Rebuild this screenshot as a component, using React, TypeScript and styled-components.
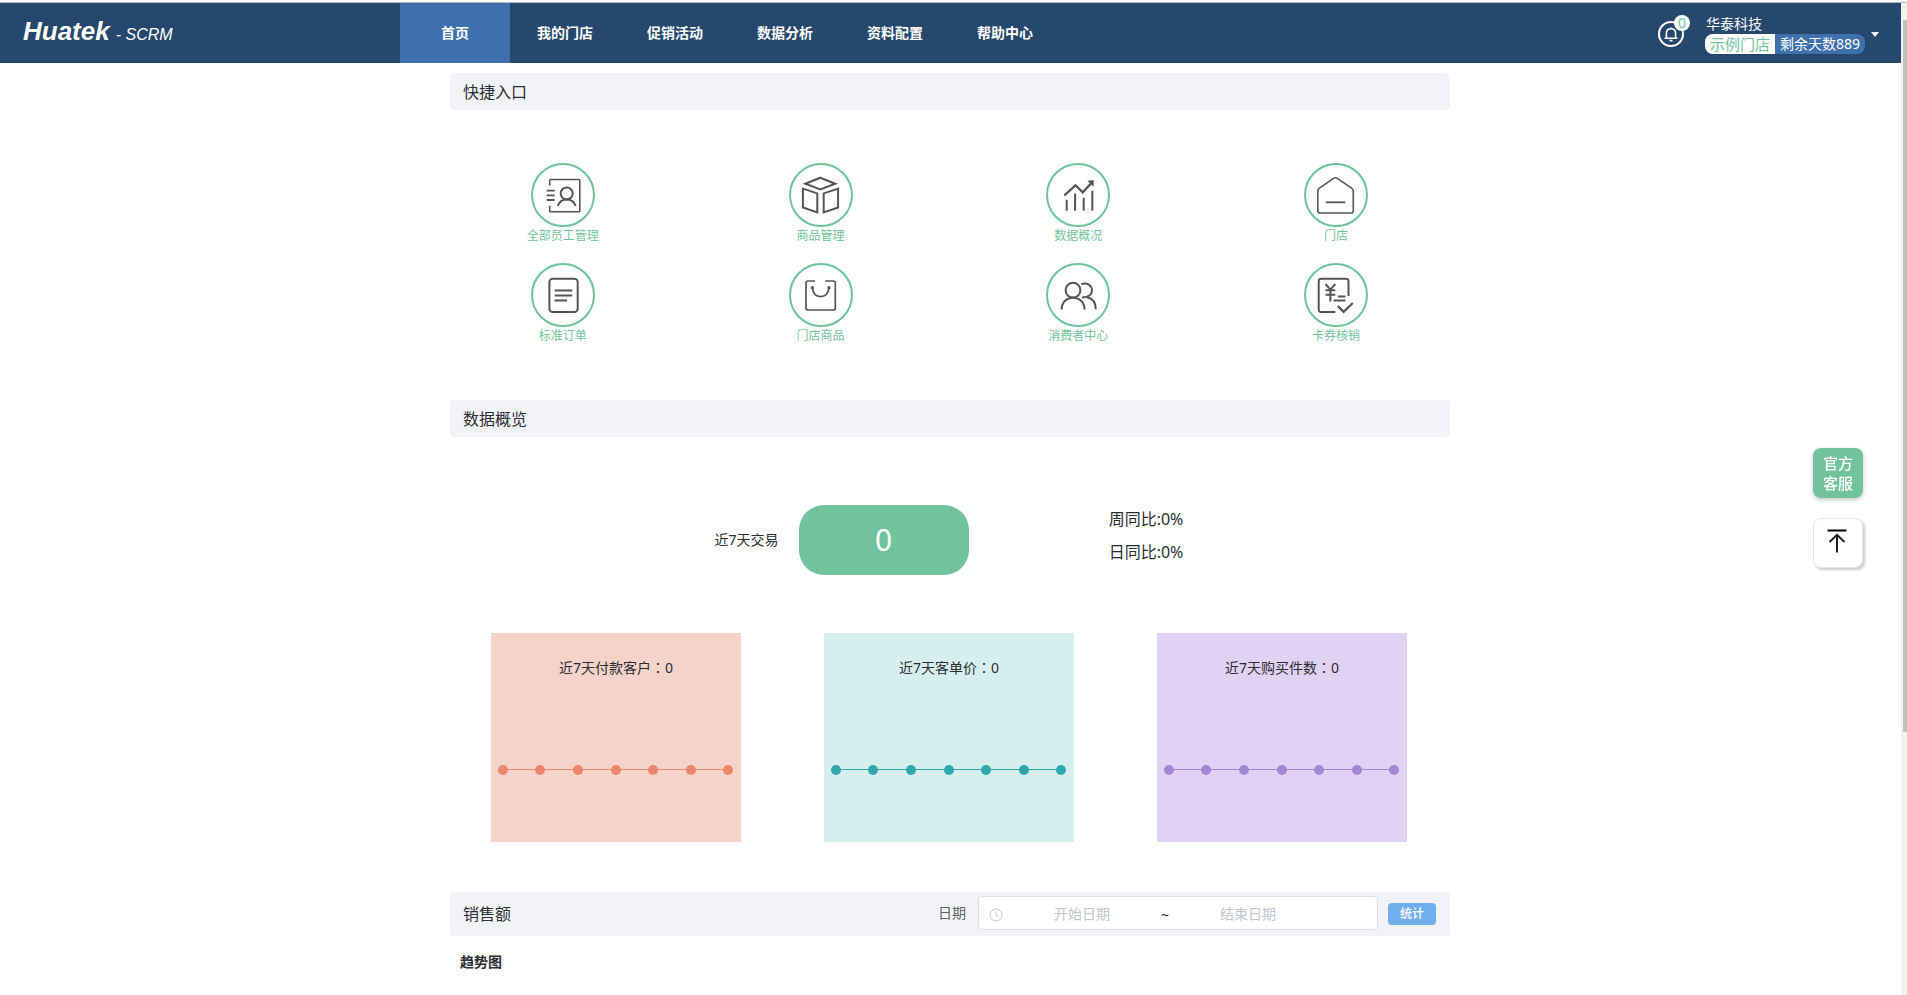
import React from 'react';
import styled, { createGlobalStyle } from 'styled-components';

const green = '#6fc39a';

const GlobalStyle = createGlobalStyle`
  *, *::before, *::after { box-sizing: border-box; }
  body {
    margin: 0;
    background: #fff;
    color: #2b2d33;
    font: 14px/20px "Noto Sans", "Noto Sans CJK SC", sans-serif;
  }
  button, input { font: inherit; }
  h1, h2, h3, p, ul { margin: 0; padding: 0; }
  a { text-decoration: none; }
`;

const Page = styled.div`
  display: flex;
  min-height: 100vh;
  padding-top: 2px;
`;

const Content = styled.div`
  flex: 1;
  min-width: 0;
  border-top: 1px solid #b4b4bb;
`;

const ScrollTrack = styled.div`
  display: flex;
  flex-direction: column;
  width: 6px;
  padding: 17px 0 0 2px;
  background: #f1f1f1;
  border-top: 1px solid #b4b4bb;
`;

const ScrollThumb = styled.div`
  height: 73%;
  background: #c1c1c1;
`;

const Header = styled.header`
  display: flex;
  align-items: center;
  height: 60px;
  padding-right: 22px;
  background: #26486d;
  color: #fff;
`;

const Logo = styled.a`
  display: flex;
  align-items: baseline;
  gap: 6px;
  width: 400px;
  padding-left: 23px;
  color: #fff;
  font: italic 16px/32px "Liberation Sans", Arial, sans-serif;
`;

const LogoName = styled.strong`
  font-size: 26px;
`;

const Nav = styled.nav`
  display: flex;
  flex: 1;
  align-self: stretch;
`;

const NavLink = styled.a<{ $active?: boolean }>`
  width: 110px;
  line-height: 60px;
  text-align: center;
  font-weight: 700;
  color: #fff;
  background: ${p => (p.$active ? '#3d70ac' : 'transparent')};
`;

const BellButton = styled.button`
  position: relative;
  display: flex;
  width: 26px;
  height: 26px;
  margin: 2px 21px 0 0;
  padding: 0;
  border: 0;
  background: none;
`;

const Badge = styled.span`
  position: absolute;
  top: -6px;
  right: -6px;
  width: 16px;
  height: 16px;
  border-radius: 8px;
  background: #fff;
  color: ${green};
  font-size: 14px;
  line-height: 16px;
  text-align: center;
`;

const Account = styled.button`
  display: flex;
  align-items: center;
  gap: 6px;
  margin-top: 2px;
  padding: 0;
  border: 0;
  background: none;
  color: #fff;
  text-align: left;
`;

const AccountName = styled.span`
  display: block;
  padding-left: 1px;
`;

const Plan = styled.span`
  display: flex;
  height: 20px;
  border-radius: 8px;
  overflow: hidden;
  background: #3d70ac;
`;

const PlanPart = styled.span<{ $store?: boolean }>`
  padding: 0 5px;
  background: ${p => (p.$store ? '#fff' : 'transparent')};
  color: ${p => (p.$store ? green : '#fff')};
  font-size: ${p => (p.$store ? 15 : 14)}px;
`;

const Main = styled.main`
  padding: 10px 1px 0 0;
`;

const Container = styled.div`
  max-width: 1000px;
  margin: 0 auto;
`;

const SectionBar = styled.div<{ $tall?: boolean }>`
  display: flex;
  align-items: center;
  justify-content: space-between;
  height: ${p => (p.$tall ? 44 : 37)}px;
  padding: 0 14px 0 13px;
  border-radius: 4px;
  background: #f2f3f8;
`;

const SectionTitle = styled.h2`
  font-size: 16px;
  line-height: 24px;
  font-weight: 400;
`;

const Shortcuts = styled.ul`
  display: grid;
  grid-template-columns: repeat(4, 1fr);
  row-gap: 16px;
  margin: 0 -15px 0 -16px;
  padding: 53px 0 53px;
  list-style: none;
`;

const Shortcut = styled.a`
  display: flex;
  flex-direction: column;
  align-items: center;
  height: 84px;
  color: ${green};
  font-size: 12px;
  line-height: 18px;
`;

const ShortcutIcon = styled.svg`
  flex: none;
  fill: none;
  stroke: #555;
  stroke-width: 2;
`;

const Trade = styled.div`
  display: flex;
  align-items: center;
  justify-content: center;
  padding: 66px 2px 0 0;
`;

const TradeTotal = styled.strong`
  width: 170px;
  margin: 0 140px 0 20px;
  border-radius: 25px;
  background: #70c39b;
  color: #fff;
  font-size: 30px;
  font-weight: 400;
  line-height: 70px;
  text-align: center;
`;

const Ratios = styled.div`
  padding-bottom: 8px;
  font-size: 16px;
  line-height: 33px;
`;

const Cards = styled.div`
  display: flex;
  gap: 83px;
  padding: 56px 41px 50px;
`;

const Card = styled.section<{ $bg: string }>`
  width: 250px;
  padding: 25px 0 62px;
  background: ${p => p.$bg};
`;

const CardTitle = styled.h3`
  font-size: 14px;
  line-height: 20px;
  font-weight: 400;
  text-align: center;
`;

/* Traditional face sets the full-width colon in the middle of its square. */
const Colon = styled.span`
  font-family: "Noto Sans CJK TC", sans-serif;
  line-height: 14px;
`;

const Trend = styled.svg`
  display: block;
  margin-top: 82px;
`;

const Filter = styled.form`
  display: flex;
  align-items: center;
  margin-top: -2px;
`;

const FilterLabel = styled.label`
  margin-right: 12px;
  color: #606266;
`;

const DateRange = styled.div`
  display: flex;
  align-items: center;
  width: 400px;
  height: 34px;
  padding-left: 10px;
  border: 1px solid #dcdfe6;
  border-radius: 4px;
  background: #fff;
`;

const ClockIcon = styled.svg`
  flex: none;
  margin: 4px 2px 0 0;
`;

const DateInput = styled.input`
  width: 154px;
  height: 30px;
  padding: 0;
  border: 0;
  outline: 0;
  background: none;
  text-align: center;
  &::placeholder { color: #c0c4cc; opacity: 1; }
`;

const RangeMark = styled.span`
  width: 12px;
  padding-top: 4px;
  text-align: center;
`;

const SubmitButton = styled.button`
  width: 48px;
  height: 22px;
  margin: 2px 0 0 10px;
  padding: 0;
  border: 0;
  border-radius: 4px;
  background: #70aeee;
  color: #fff;
  font-size: 12px;
  font-weight: 500;
  line-height: 22px;
`;

const ChartTitle = styled.h3`
  padding: 16px 10px;
  font-size: 14px;
  line-height: 20px;
`;

const SideTools = styled.aside`
  position: fixed;
  top: 448px;
  right: 44px;
  display: grid;
  gap: 20px;
`;

const SideButton = styled.button<{ $primary?: boolean }>`
  display: flex;
  align-items: center;
  justify-content: center;
  width: 50px;
  height: 50px;
  padding: ${p => (p.$primary ? '0 9px' : '0 2px 4px 0')};
  border: ${p => (p.$primary ? '0' : '1px solid #e6e6e6')};
  border-radius: 8px;
  background: ${p => (p.$primary ? '#70c39b' : '#fff')};
  color: #fff;
  font-size: 15px;
  font-weight: 500;
  line-height: 20px;
  box-shadow: ${p => (p.$primary ? '0 2px 5px' : '2px 2px 3px')} rgba(0, 0, 0, 0.22);
`;

const navItems = ['首页', '我的门店', '促销活动', '数据分析', '资料配置', '帮助中心'];

const shortcuts: { label: string; icon: React.ReactNode }[] = [
  {
    label: '全部员工管理',
    icon: (
      <>
        <path strokeWidth="1.6" d="M18.7 22.5V17.3Q18.7 16.5 19.5 16.5H48Q48.8 16.5 48.8 17.3V47.9Q48.8 48.7 48 48.7H19.5Q18.7 48.7 18.7 47.9V42.7" />
        <path strokeWidth="1.8" d="M15.7 27.7h8M15.7 32.3h8M15.7 37h8" />
        <circle cx="35.7" cy="30.5" r="6" />
        <path d="M26.7 42.8C28.3 38.8 31.8 36.6 35.7 36.6S43.1 38.8 44.7 42.8" />
      </>
    ),
  },
  {
    label: '商品管理',
    icon: (
      <path d="M31.3 14.7L46.3 20.7L31.3 26.5L16.3 20.7ZM13.9 25.6L28.3 30.4V49.4L13.9 44.5ZM49.1 25.6L34.7 30.4V49.4L49.1 44.5Z" />
    ),
  },
  {
    label: '数据概况',
    icon: (
      <>
        <path strokeWidth="2.3" d="M18.3 32.5L29.5 22.3L36.7 29.3L45.5 20" />
        <path fill="#555" stroke="none" d="M41.3 17.7L47.6 17.3V23.8Z" />
        <path d="M20.7 36.7v11M29.1 30.5v17.2M37.7 34.7v13M46.3 27.8v19.9" />
      </>
    ),
  },
  {
    label: '门店',
    icon: (
      <>
        <path strokeWidth="1.6" d="M13.8 28.5Q13.8 26.3 15.5 25.2L29.5 15.4Q31.4 14.2 33.3 15.4L47.6 25.2Q49.3 26.3 49.3 28.5V47.7Q49.3 50 47 50H16.1Q13.8 50 13.8 47.7Z" />
        <path strokeWidth="1.8" d="M21.8 39.3h19.4" />
      </>
    ),
  },
  {
    label: '标准订单',
    icon: (
      <>
        <rect x="18.4" y="15.8" width="28.3" height="33.2" rx="3.3" />
        <path d="M23.7 27.5h17.6M23.7 32.5h17.6M23.7 37.4h12.4" />
      </>
    ),
  },
  {
    label: '门店商品',
    icon: (
      <>
        <path strokeWidth="1.7" d="M26 18H19Q17 18 17 20V45Q17 47 19 47H44.3Q46.3 47 46.3 45V20Q46.3 18 44.3 18H36.3" />
        <path strokeWidth="1.7" d="M23.4 24.7C24 30.5 27.2 33.6 31.6 33.6S39.3 30.5 40 24.7" />
        <circle cx="23.3" cy="24.7" r="1.6" fill="#555" stroke="none" />
        <circle cx="40" cy="24.7" r="1.6" fill="#555" stroke="none" />
      </>
    ),
  },
  {
    label: '消费者中心',
    icon: (
      <>
        <circle cx="27" cy="27.2" r="7.4" />
        <path d="M15.6 46.6C15.6 39.6 20.4 34.8 27.1 34.8S38.6 39.6 38.6 46.6" />
        <path d="M35.3 21.2C41 18.9 46 22.4 46 27.4C46 31.6 42.6 34.6 36 34.5M41 34.3C46.5 35.5 49.8 40 49.8 46.2" />
      </>
    ),
  },
  {
    label: '卡券核销',
    icon: (
      <>
        <path d="M31.3 49H17.2Q14.7 49 14.7 46.5V18.3Q14.7 15.8 17.2 15.8H42Q44.5 15.8 44.5 18.3V33" />
        <path d="M21.5 21L26.4 26.6L31.3 21M26.4 26.5V38.5M21.5 27.3h9.8M21.5 31.7h9.8M34 33.5h7.4M29.6 37.6h11.8" />
        <path strokeWidth="2.3" d="M33.8 43L39.6 48.8L48.8 40" />
      </>
    ),
  },
];

const cards = [
  { title: '近7天付款客户', value: 0, bg: '#f5d3c9', line: '#ea866a' },
  { title: '近7天客单价', value: 0, bg: '#d5efee', line: '#30a6ad' },
  { title: '近7天购买件数', value: 0, bg: '#e0d1f5', line: '#a387d3' },
];

const trendPoints = [12, 49, 87, 125, 162, 200, 237];

export default function App() {
  return (
    <>
      <GlobalStyle />
      <Page>
        <Content>
          <Header>
            <Logo href="#">
              <LogoName>Huatek</LogoName>
              <span>- SCRM</span>
            </Logo>
            <Nav>
              {navItems.map((item, i) => (
                <NavLink key={item} href="#" $active={i === 0}>{item}</NavLink>
              ))}
            </Nav>
            <BellButton type="button" aria-label="消息">
              <svg width="26" height="26" viewBox="0 0 26 26" fill="none" stroke="#fff">
                <circle cx="13" cy="13" r="12" strokeWidth="2" />
                <path strokeWidth="1.6" d="M6.5 17.3H19.5M8.4 17V12.4C8.4 9.6 10.4 7.8 13 7.8S17.6 9.6 17.6 12.4V17M13 7.8V6.4M11.5 19.6H14.5" />
              </svg>
              <Badge>0</Badge>
            </BellButton>
            <Account type="button">
              <span>
                <AccountName>华泰科技</AccountName>
                <Plan>
                  <PlanPart $store>示例门店</PlanPart>
                  <PlanPart>剩余天数889</PlanPart>
                </Plan>
              </span>
              <svg width="8" height="5" viewBox="0 0 8 5" fill="#fff"><path d="M0 0H8L4 5Z" /></svg>
            </Account>
          </Header>

          <Main>
            <Container>
              <SectionBar><SectionTitle>快捷入口</SectionTitle></SectionBar>
              <Shortcuts>
                {shortcuts.map(s => (
                  <li key={s.label}>
                    <Shortcut href="#">
                      <ShortcutIcon width="64" height="64" viewBox="0 0 64 64">
                        <circle cx="32" cy="32" r="31" stroke={green} />
                        {s.icon}
                      </ShortcutIcon>
                      {s.label}
                    </Shortcut>
                  </li>
                ))}
              </Shortcuts>

              <SectionBar><SectionTitle>数据概览</SectionTitle></SectionBar>
              <Trade>
                <span>近7天交易</span>
                <TradeTotal>0</TradeTotal>
                <Ratios>
                  <p>周同比:0%</p>
                  <p>日同比:0%</p>
                </Ratios>
              </Trade>
              <Cards>
                {cards.map(c => (
                  <Card key={c.title} $bg={c.bg}>
                    <CardTitle>{c.title}<Colon>：</Colon>{c.value}</CardTitle>
                    <Trend width="250" height="20" viewBox="0 0 250 20">
                      <path d="M12 9.5H237" stroke={c.line} />
                      {trendPoints.map(x => (
                        <circle key={x} cx={x} cy="10" r="5" fill={c.line} />
                      ))}
                    </Trend>
                  </Card>
                ))}
              </Cards>

              <SectionBar $tall>
                <SectionTitle>销售额</SectionTitle>
                <Filter>
                  <FilterLabel htmlFor="start">日期</FilterLabel>
                  <DateRange>
                    <ClockIcon width="14" height="14" viewBox="0 0 14 14" fill="none" stroke="#c0c4cc">
                      <circle cx="7" cy="7" r="6" />
                      <path d="M7 3.3V7.3L9 9.2" />
                    </ClockIcon>
                    <DateInput id="start" placeholder="开始日期" />
                    <RangeMark>~</RangeMark>
                    <DateInput aria-label="结束日期" placeholder="结束日期" />
                  </DateRange>
                  <SubmitButton type="button">统计</SubmitButton>
                </Filter>
              </SectionBar>
              <ChartTitle>趋势图</ChartTitle>
            </Container>
          </Main>
        </Content>
        <ScrollTrack><ScrollThumb /></ScrollTrack>
      </Page>

      <SideTools>
        <SideButton type="button" $primary>官方客服</SideButton>
        <SideButton type="button" aria-label="返回顶部">
          <svg width="24" height="24" viewBox="0 0 24 24" fill="none" stroke="#222" strokeWidth="2">
            <path stroke="#000" d="M2.5 1.5H21.5" />
            <path d="M12 23.5V6M4.5 13L12 5.8L19.5 13" />
          </svg>
        </SideButton>
      </SideTools>
    </>
  );
}
